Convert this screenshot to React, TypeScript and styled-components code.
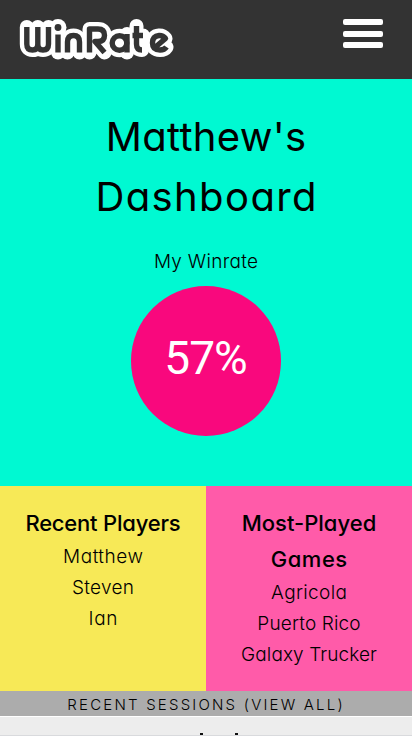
import React from 'react';
import styled, { createGlobalStyle } from 'styled-components';

const Global = createGlobalStyle`
  *, *::before, *::after { box-sizing: border-box; }
  html, body { margin: 0; height: 736px; overflow: hidden; }
  body {
    background: #ededed;
    color: #000;
    font-family: Inter, 'Open Sans', sans-serif;
    font-feature-settings: 'cv11' 1;
  }
  h1, h2, p, ul { margin: 0; padding: 0; font-weight: 400; }
`;

const Page = styled.div`
  display: flex;
  flex-direction: column;
  width: 412px;
  height: 736px;
  overflow: hidden;
`;

const Header = styled.header`
  display: flex;
  flex: none;
  justify-content: space-between;
  align-items: flex-start;
  height: 79px;
  padding: 19px 29px 0 19px;
  background: #333;
`;

const MenuButton = styled.button`
  display: flex;
  flex-direction: column;
  justify-content: space-between;
  width: 40px;
  height: 29px;
  padding: 0;
  border: 0;
  background: none;
`;

const Bar = styled.span`
  height: 6px;
  border-radius: 2px;
  background: #fff;
`;

const Hero = styled.section`
  display: flex;
  flex: none;
  flex-direction: column;
  align-items: center;
  height: 407px;
  padding-top: 28px;
  background: #00f9d2;
`;

const Line = styled.span<{ $spacing?: number }>`
  display: block;
  white-space: nowrap;
  letter-spacing: ${(p) => p.$spacing ?? 0}px;
  margin-right: ${(p) => -(p.$spacing ?? 0)}px;
`;

const Title = styled.h1`
  font-size: 40px;
  line-height: 60px;
  font-weight: 380;
  text-align: center;
`;

const Caption = styled.p`
  margin-top: 20px;
  font-size: 19px;
  line-height: 30px;
  font-weight: 330;
`;

const Circle = styled.div`
  display: flex;
  align-items: center;
  justify-content: center;
  width: 150px;
  height: 150px;
  margin-top: 9px;
  padding-bottom: 6px;
  border-radius: 50%;
  background: #f9087d;
  color: #fff;
  font-family: Roboto, sans-serif;
  font-size: 46px;
`;

const Columns = styled.section`
  display: grid;
  flex: none;
  grid-template-columns: 1fr 1fr;
  height: 205px;
`;

const Panel = styled.div<{ $color: string }>`
  padding-top: 19px;
  background: ${(p) => p.$color};
  text-align: center;
`;

const PanelTitle = styled.h2`
  font-size: 22px;
  line-height: 36px;
  font-weight: 550;
`;

const List = styled.ul`
  list-style: none;
  font-size: 19px;
  line-height: 31px;
  font-weight: 320;
`;

const SessionsBar = styled.div`
  display: flex;
  flex: none;
  justify-content: center;
  height: 25px;
  padding-right: 2px;
  background: #acacac;
  font-size: 15px;
  line-height: 27px;
  font-weight: 330;
`;

const Session = styled.div`
  display: flex;
  flex: none;
  justify-content: center;
  align-items: flex-end;
  gap: 32px;
  height: 20px;
  padding-left: 25px;
  border-top: 1px solid #fff;
  border-bottom: 1px solid #d9dadd;
  background: #ededed;
`;

const Tip = styled.span`
  width: 3px;
  height: 2px;
  background: #111;
`;

const Logo = () => (
  <svg width="156" height="41" viewBox="19 19 156 41" fill="none" strokeLinejoin="round">
    <defs>
      <g id="mark">
        <path d="M26.800 27V44Q26.800 50 32.500 50Q37.800 50 37.800 44V27M37.800 44Q37.800 50 43 50Q48.500 50 48.500 44V27" />
        <path d="M58 34.500V52.500" />
        <path d="M67.500 52.500V42Q67.500 35.500 73.500 35.500Q79.500 35.500 79.500 42V52.500" />
        <path d="M89.500 52.500V29H98Q104.500 29 104.500 35.200Q104.500 41.500 98 41.500H95L104.500 52.500" />
        <circle cx="119.500" cy="43" r="7.300" />
        <path d="M127 34V52.500" />
        <path d="M136.500 26V44Q136.500 50 142 50M132.500 35.500H143" />
        <path d="M155.500 47L165.500 38.500Q163 35.300 159 35.500Q152.500 36 152.500 43Q152.500 50 160 50Q164.500 50 166.500 47" />
      </g>
    </defs>
    <use href="#mark" stroke="#fff" strokeWidth="14" strokeLinecap="round" />
    <circle cx="58" cy="27.500" r="8.500" fill="#fff" />
    <path d="M26 28H49V51H168V40H26ZM88 28H102V45H88Z" fill="#fff" />
    <use href="#mark" stroke="#333" strokeWidth="5.400" />
    <circle cx="58" cy="27.500" r="3.400" fill="#333" />
  </svg>
);

type Entry = [string, number];
const players: Entry[] = [['Matthew', 0.5], ['Steven', 0.3], ['Ian', 0.6]];
const games: Entry[] = [['Agricola', 0.35], ['Puerto Rico', 0.15], ['Galaxy Trucker', 0.1]];

const Entries = ({ items }: { items: Entry[] }) => (
  <List>
    {items.map(([name, spacing]) => (
      <li key={name}><Line $spacing={spacing}>{name}</Line></li>
    ))}
  </List>
);

export default function App() {
  return (
    <Page>
      <Global />
      <Header>
        <Logo />
        <MenuButton aria-label="Menu"><Bar /><Bar /><Bar /></MenuButton>
      </Header>
      <Hero>
        <Title><Line $spacing={0.3}>Matthew's</Line><Line $spacing={1.4}>Dashboard</Line></Title>
        <Caption><Line $spacing={0.3}>My Winrate</Line></Caption>
        <Circle><Line $spacing={-0.9}>57%</Line></Circle>
      </Hero>
      <Columns>
        <Panel $color="#f7e957">
          <PanelTitle><Line $spacing={-0.2}>Recent Players</Line></PanelTitle>
          <Entries items={players} />
        </Panel>
        <Panel $color="#ff5ba9">
          <PanelTitle><Line>Most-Played</Line><Line $spacing={0.5}>Games</Line></PanelTitle>
          <Entries items={games} />
        </Panel>
      </Columns>
      <SessionsBar><Line $spacing={2.2}>RECENT SESSIONS (VIEW ALL)</Line></SessionsBar>
      <Session><Tip /><Tip /></Session>
    </Page>
  );
}
